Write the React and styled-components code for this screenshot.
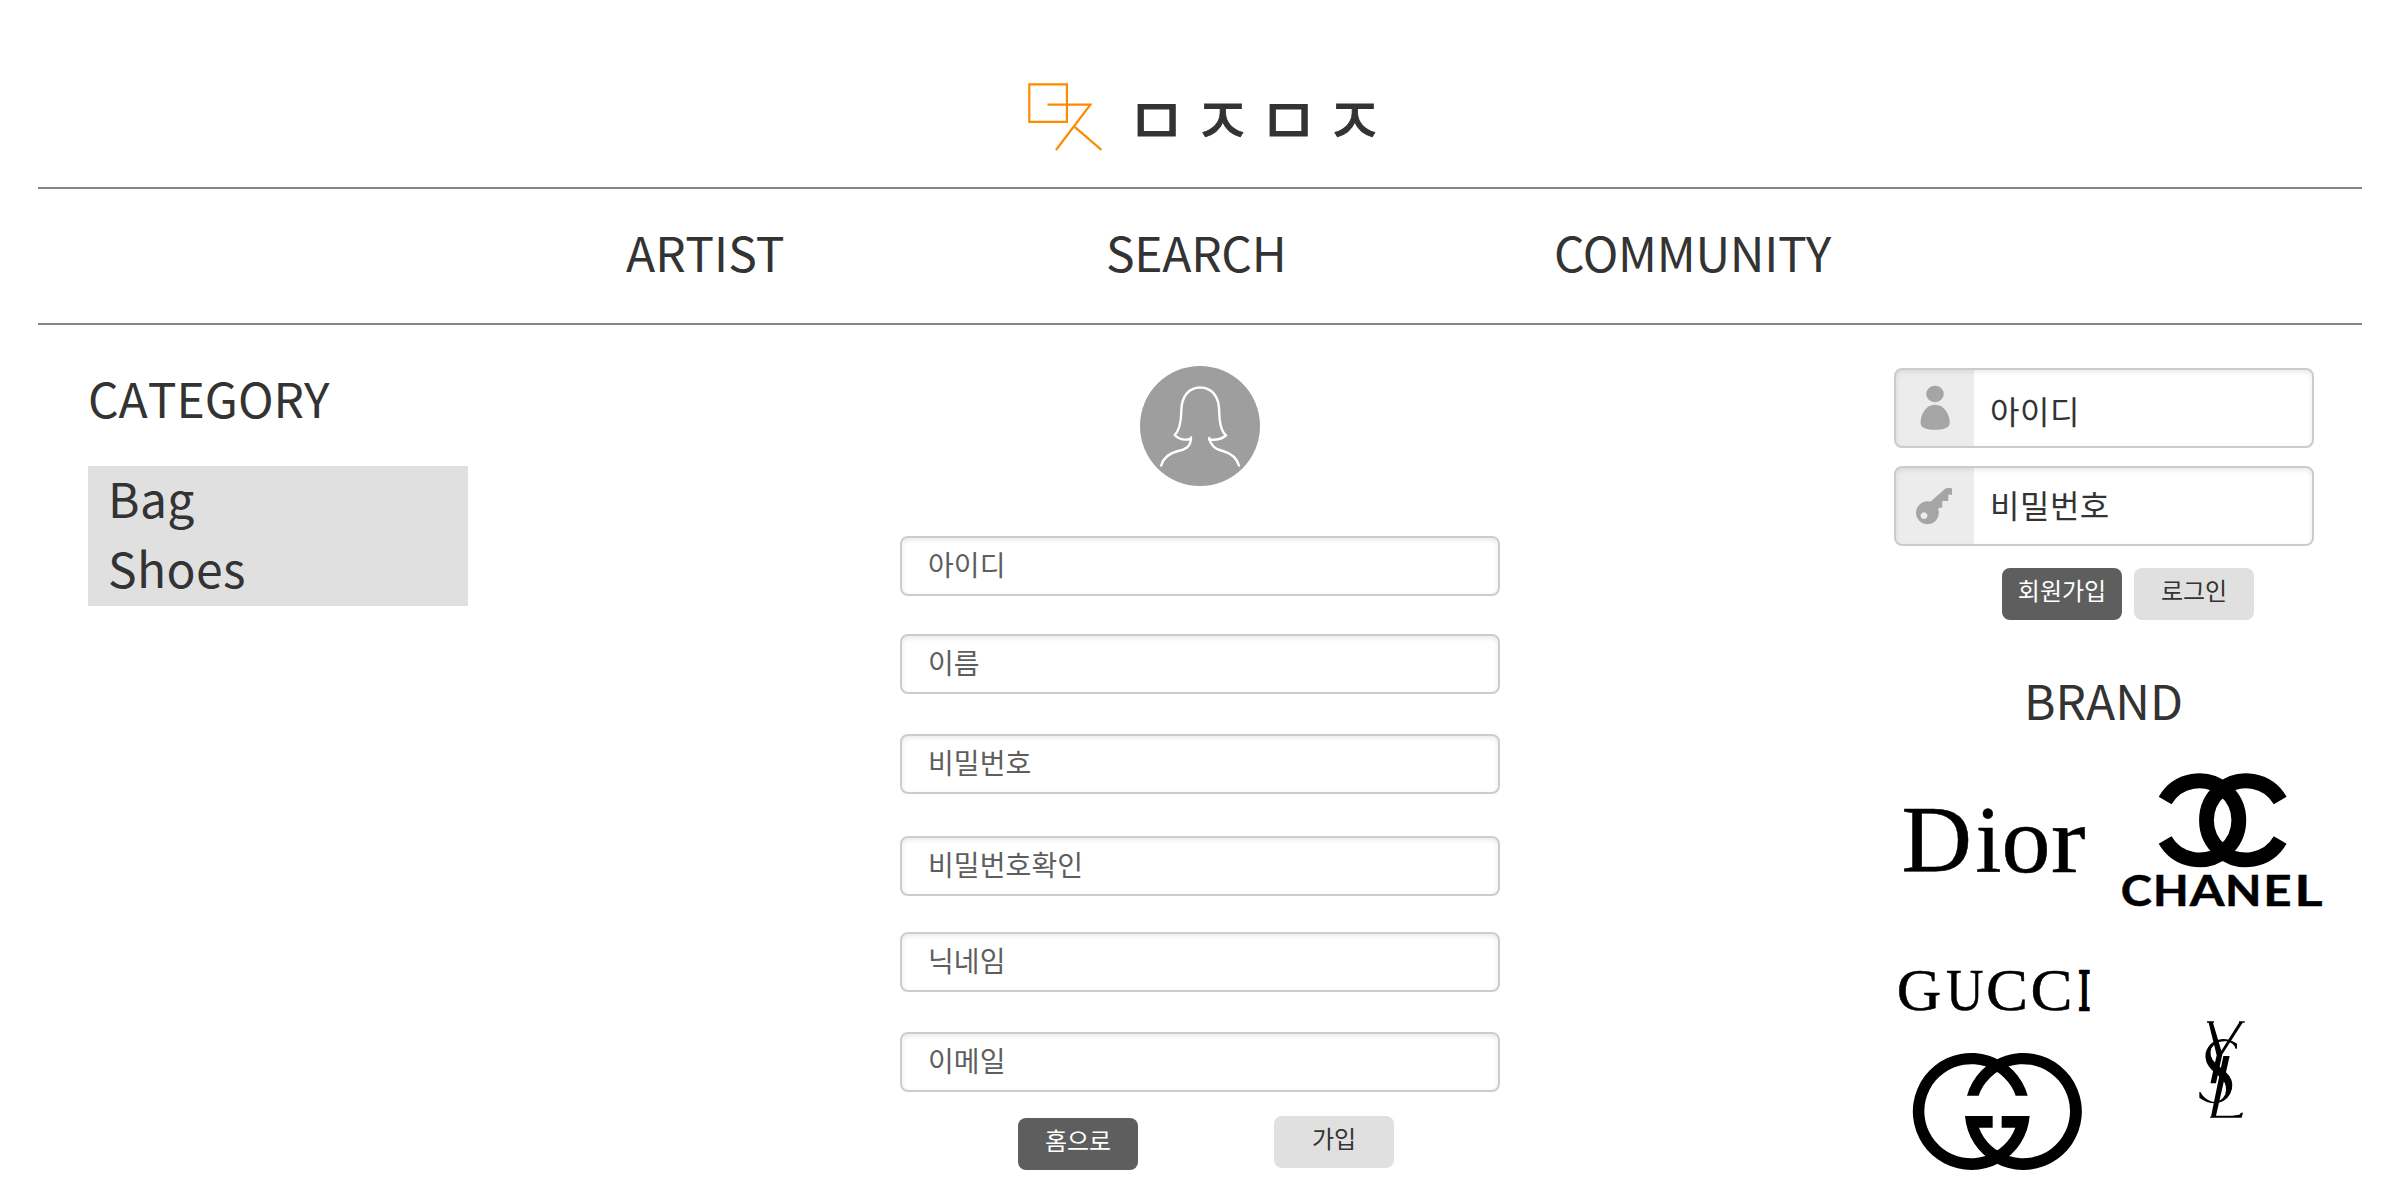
import React from "react";
import styled, { createGlobalStyle } from "styled-components";

const GlobalStyle = createGlobalStyle`
  *, *::before, *::after { box-sizing: border-box; }
  body {
    margin: 0;
    background: #fff;
    color: #333;
    font-family: "Noto Sans CJK KR", "Noto Sans", sans-serif;
  }
`;

const Page = styled.div`
  width: 2400px;
  height: 1200px;
  padding: 0 38px;
  overflow: hidden;
  display: flex;
  flex-direction: column;
`;

const Header = styled.header`
  height: 189px;
  flex: none;
  display: flex;
  align-items: flex-start;
  padding: 81px 0 0 988px;
  border-bottom: 2px solid #868686;
`;

const Title = styled.h1`
  margin: 0 0 0 18px;
  font-size: 66px;
  font-weight: 400;
  line-height: 70px;
  letter-spacing: 5.3px;
  white-space: nowrap;
  -webkit-text-stroke: 0.8px #333;
`;

const Nav = styled.nav`
  height: 136px;
  flex: none;
  display: grid;
  grid-template-columns: 480px 448px 1fr;
  align-items: center;
  padding: 0 0 10px 588px;
  border-bottom: 2px solid #868686;
`;

const NavLink = styled.a`
  font-size: 48px;
  line-height: 70px;
  letter-spacing: ${(p) => p.$tracking || 0}px;
`;

const Main = styled.main`
  flex: 1;
  min-height: 0;
  display: grid;
  grid-template-columns: 430px 1fr 468px;
`;

const Sidebar = styled.aside`
  padding: 37px 0 0 50px;
`;

const Heading = styled.h2`
  margin: 0;
  font-size: 48px;
  font-weight: 400;
  line-height: 70px;
  font-kerning: none;
`;

const CategoryList = styled.ul`
  list-style: none;
  margin: 34px 0 0;
  padding: 0 0 0 20px;
  width: 380px;
  background: #e0e0e0;
`;

const CategoryItem = styled.li`
  height: 70px;
  font-size: 48px;
  line-height: 62px;
  letter-spacing: 0.4px;
`;

const SignUp = styled.form`
  width: 600px;
  margin-left: 432px;
  padding-top: 41px;
  display: flex;
  flex-direction: column;
`;

const Avatar = styled.svg`
  width: 120px;
  height: 120px;
  align-self: center;
  margin-bottom: 50px;
`;

const Field = styled.label`
  height: 60px;
  flex: none;
  margin-bottom: ${(p) => p.$gap}px;
  padding: 0 0 4px 26px;
  display: flex;
  align-items: center;
  border: 2px solid #ccc;
  border-radius: 8px;
  box-shadow: inset 0 2px 5px rgba(0, 0, 0, 0.09);
  color: #5e5e5e;
  font-size: 28px;
  line-height: 40px;
  letter-spacing: 0.1px;
`;

const FormActions = styled.div`
  display: flex;
  padding-left: 118px;
  gap: 136px;
`;

const Button = styled.button`
  width: 120px;
  height: 52px;
  margin: ${(p) => p.$drop || 0}px 0 0;
  padding: 0 0 8px;
  border: 0;
  border-radius: 8px;
  background: ${(p) => (p.$dark ? "#5e5e5e" : "#e0e0e0")};
  color: ${(p) => (p.$dark ? "#fff" : "#333")};
  font-family: inherit;
  font-size: 24px;
  line-height: 34px;
  white-space: nowrap;
`;

const RightPanel = styled.aside`
  padding-top: 43px;
`;

const LoginField = styled.label`
  width: 420px;
  height: 80px;
  margin-bottom: ${(p) => p.$gap}px;
  display: flex;
  border: 2px solid #ccc;
  border-radius: 8px;
  background: linear-gradient(to right, #ececec 78px, #fff 78px);
  box-shadow: inset 0 2px 5px rgba(0, 0, 0, 0.09);
  overflow: hidden;
`;

const LoginIcon = styled.svg`
  width: 78px;
  height: 76px;
  flex: none;
  fill: #a5a5a5;
`;

const LoginText = styled.span`
  padding: ${(p) => p.$top}px 0 0 16px;
  font-size: 32px;
  line-height: 46px;
  letter-spacing: 0.5px;
`;

const LoginActions = styled.div`
  display: flex;
  gap: 12px;
  padding-left: 108px;
`;

const BrandHeading = styled(Heading)`
  margin: 44px 0 0 130px;
`;

const BrandGrid = styled.div`
  display: grid;
  grid-template-columns: 210px 230px;
  grid-template-rows: 172px 256px;
  margin-top: 26px;
`;

const BrandLogo = styled.svg`
  display: block;
  width: 100%;
  height: 100%;
  overflow: visible;
`;

const fields = [
  { label: "아이디", gap: 38 },
  { label: "이름", gap: 40 },
  { label: "비밀번호", gap: 42 },
  { label: "비밀번호확인", gap: 36 },
  { label: "닉네임", gap: 40 },
  { label: "이메일", gap: 24 },
];

const chanelLetters = [
  ["C", 2120.8, 31],
  ["H", 2153, 35.7],
  ["A", 2189.8, 34.8],
  ["N", 2225, 36.5],
  ["E", 2263.3, 28.3],
  ["L", 2294.5, 28],
];

const diorLetters = [
  ["D", 1901.5, 70.5],
  ["i", 1975.5, 26],
  ["o", 2001.5, 49],
  ["r", 2051, 34.5],
];

const gucciLetters = [
  ["G", 1896.8, 44.5],
  ["U", 1946, 37.5],
  ["C", 1986, 42],
  ["C", 2030.6, 42],
  ["I", 2078.4, 11.6, 2.6],
];

function Letters({ items, y }) {
  return items.map(([letter, x, width, weight = 0.5]) => (
    <text key={x} x={x} y={y} textLength={width} lengthAdjust="spacingAndGlyphs" stroke="#000" strokeWidth={weight}>
      {letter}
    </text>
  ));
}

function Mark() {
  return (
    <svg width="82" height="78" viewBox="1026 81 82 78" fill="none" stroke="#fb8c00" strokeWidth="2.2">
      <path d="M1029.3 84.3h37.6v37.6h-37.6z" />
      <path d="M1047.5 104.6H1090.4L1056 150" />
      <path d="M1074.7 126.8L1101.4 149.8" />
    </svg>
  );
}

function Dior() {
  return (
    <BrandLogo viewBox="1894 760 210 172">
      <g fontFamily="Liberation Serif, serif" fontSize="96">
        <Letters items={diorLetters} y={872.3} />
      </g>
    </BrandLogo>
  );
}

function Chanel() {
  return (
    <BrandLogo viewBox="2104 760 230 172">
      <g fill="none" stroke="#000" strokeWidth="14.8">
        <path d="M2280.2 800.55A39.5 39.5 0 1 0 2280.2 840.05" />
        <path d="M2165.1 800.55A39.5 39.5 0 1 1 2165.1 840.05" />
      </g>
      <g fontFamily="Lato, sans-serif" fontWeight="700" fontSize="41.5">
        <Letters items={chanelLetters} y={905.6} />
      </g>
    </BrandLogo>
  );
}

function Gucci() {
  return (
    <BrandLogo viewBox="1894 932 210 256">
      <g fontFamily="Liberation Serif, serif" fontSize="59">
        <Letters items={gucciLetters} y={1010.2} />
      </g>
      <g transform="translate(1880 950) scale(0.33333)">
        <path d="M443 437A175.5 175.5 0 1 0 449 498H365V533H406A141 141 0 1 1 407 437Z" />
        <path d="M261 437A175.5 175.5 0 1 1 255 498H338V533H297A141 141 0 1 0 296 437Z" />
      </g>
    </BrandLogo>
  );
}

function Ysl() {
  return (
    <BrandLogo viewBox="2104 932 230 256">
      <g transform="translate(2170 1000) scale(0.33333)">
        <path d="M111 64H132V68H129L154 152L207 68V64H224V68H218L157 163L138 250H122V247L140 166L116 68H111Z" />
        <path d="M160 168H179L138 347Q180 349 208 344L213 338H219L215 353H120V350H123Z" />
        <path d="M201 131V146H197Q191 128 170 124Q137 121 124 145Q115 170 137 190L170 219Q191 238 186 266Q178 300 145 309Q115 313 88 293V276L92 277Q100 296 126 305Q154 308 166 283Q173 257 158 239L125 209Q102 186 107 158Q119 120 158 117Q182 117 201 131Z" />
      </g>
    </BrandLogo>
  );
}

export default function App() {
  return (
    <>
      <GlobalStyle />
      <Page>
        <Header>
          <Mark />
          <Title>ㅁㅈㅁㅈ</Title>
        </Header>
        <Nav>
          <NavLink $tracking={0.1}>ARTIST</NavLink>
          <NavLink $tracking={-0.3}>SEARCH</NavLink>
          <NavLink $tracking={-0.3}>COMMUNITY</NavLink>
        </Nav>
        <Main>
          <Sidebar>
            <Heading>CATEGORY</Heading>
            <CategoryList>
              <CategoryItem>Bag</CategoryItem>
              <CategoryItem>Shoes</CategoryItem>
            </CategoryList>
          </Sidebar>
          <SignUp>
            <Avatar viewBox="0 0 120 120">
              <circle cx="60" cy="60" r="60" fill="#9e9e9e" />
              <path
                d="M51 71.5Q51 78 47 81.5Q43 84.3 38 85Q24 88.5 21.2 99.5M69.2 72Q70 77 73.5 80.5Q77 84 83 85Q96 89 99 99.5M51 72.8Q41 75.5 34.7 69Q41 63 41.3 45C41.5 30 49 21.5 60.2 21.5C71.5 21.5 79 30 79.2 45Q79.5 64 86 69.5Q79 75 69 73.5"
                fill="none"
                stroke="#fff"
                strokeWidth="2.4"
                strokeLinecap="round"
                strokeLinejoin="round"
              />
            </Avatar>
            {fields.map((f) => (
              <Field key={f.label} $gap={f.gap}>
                {f.label}
              </Field>
            ))}
            <FormActions>
              <Button type="button" $dark $drop={2}>홈으로</Button>
              <Button type="button">가입</Button>
            </FormActions>
          </SignUp>
          <RightPanel>
            <LoginField $gap={18}>
              <LoginIcon viewBox="1896 370 78 76">
                <ellipse cx="1935" cy="394" rx="8.8" ry="8.2" />
                <path d="M1935 404.8C1944 404.8 1949.7 414 1949.7 423C1949.7 428 1943 429.8 1935 429.8S1920.6 428 1920.6 423C1920.6 414 1926 404.8 1935 404.8Z" />
              </LoginIcon>
              <LoginText $top={17}>아이디</LoginText>
            </LoginField>
            <LoginField $gap={22}>
              <LoginIcon viewBox="1896 468 78 76">
                <path
                  fillRule="evenodd"
                  d="M1930.5 501.8L1944.8 489Q1946 488 1947.5 488H1950.8Q1952 488 1952 489.2V494.8H1948.2V501H1942.3V507.2L1938 508.6A11.4 11.4 0 1 1 1930.5 501.8ZM1924 512.3a3.4 3.4 0 1 0 0.01 0Z"
                />
              </LoginIcon>
              <LoginText $top={13}>비밀번호</LoginText>
            </LoginField>
            <LoginActions>
              <Button type="button" $dark>회원가입</Button>
              <Button type="button">로그인</Button>
            </LoginActions>
            <BrandHeading>BRAND</BrandHeading>
            <BrandGrid>
              <Dior />
              <Chanel />
              <Gucci />
              <Ysl />
            </BrandGrid>
          </RightPanel>
        </Main>
      </Page>
    </>
  );
}
